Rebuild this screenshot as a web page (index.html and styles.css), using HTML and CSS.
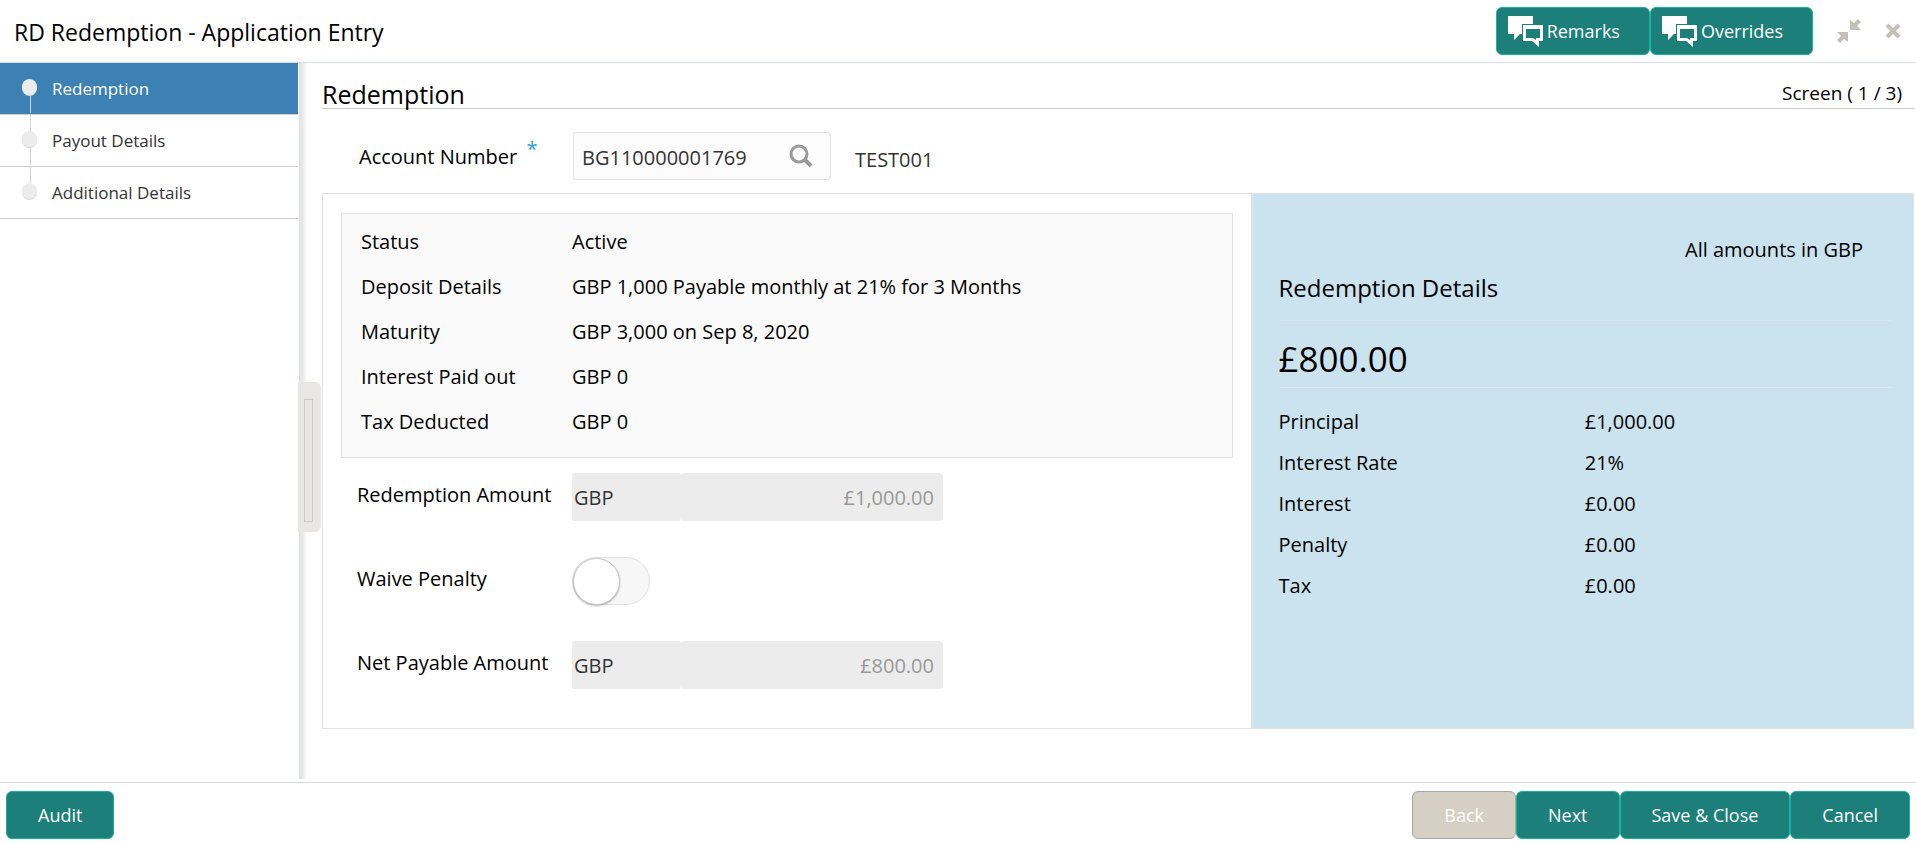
FILE: index.html
```html
<!DOCTYPE html>
<html lang="en">
<head>
  <meta charset="UTF-8">
  <meta name="viewport" content="width=device-width, initial-scale=1.0">
  <title>RD Redemption - Application Entry</title>
  <link rel="stylesheet" href="styles.css">
</head>
<body>
  <header class="header">
    <h1>RD Redemption - Application Entry</h1>
    <div class="header-actions">
      <button type="button" class="btn btn-icon">
        <svg width="36" height="32" viewBox="0 0 36 32"><path fill="#fff" d="M1 1h25v8H15v10h-2l-6 6v-6H1z"/><path fill="#fff" fill-rule="evenodd" d="M16 10h20v16h-4v6l-7-6h-9zM19 14v9h7l3 2v-2h4v-9z"/></svg>
        Remarks
      </button>
      <button type="button" class="btn btn-icon">
        <svg width="36" height="32" viewBox="0 0 36 32"><path fill="#fff" d="M1 1h25v8H15v10h-2l-6 6v-6H1z"/><path fill="#fff" fill-rule="evenodd" d="M16 10h20v16h-4v6l-7-6h-9zM19 14v9h7l3 2v-2h4v-9z"/></svg>
        Overrides
      </button>
      <button type="button" class="window-btn" aria-label="Collapse">
        <svg width="26" height="26" viewBox="0 0 26 26"><path fill="#c4c0b8" d="M14 2v10h11l-4-4 4-4-3-3-4 4zM12 24V14H1l4 4-4 4 3 3 4-4z"/></svg>
      </button>
      <button type="button" class="window-btn" aria-label="Close">
        <svg width="16" height="16" viewBox="0 0 16 16"><path stroke="#c4c0b8" stroke-width="4" d="M2 2l12 12M14 2L2 14"/></svg>
      </button>
    </div>
  </header>

  <div class="content">
    <nav class="sidebar">
      <a href="#redemption" class="step active">Redemption</a>
      <a href="#payout" class="step">Payout Details</a>
      <a href="#additional" class="step">Additional Details</a>
    </nav>
    <div class="splitter">
      <button type="button" class="handle" aria-label="Toggle menu"><span></span></button>
    </div>

    <main class="main">
      <div class="main-title">
        <h2>Redemption</h2>
        <span>Screen ( 1 / 3)</span>
      </div>

      <div class="account">
        <label for="account-number">Account Number <sup>*</sup></label>
        <div class="search-box">
          <input type="text" id="account-number" value="BG110000001769">
          <button type="button" aria-label="Search">
            <svg width="24" height="24" viewBox="0 0 24 24" fill="none" stroke="#999"><circle cx="10" cy="10" r="8" stroke-width="3"/><path stroke-width="4" d="M15 15l7 7"/></svg>
          </button>
        </div>
        <span class="account-name">TEST001</span>
      </div>

      <div class="panel">
        <section class="panel-left">
          <dl class="info">
            <dt>Status</dt><dd>Active</dd>
            <dt>Deposit Details</dt><dd>GBP 1,000 Payable monthly at 21% for 3 Months</dd>
            <dt>Maturity</dt><dd>GBP 3,000 on Sep 8, 2020</dd>
            <dt>Interest Paid out</dt><dd>GBP 0</dd>
            <dt>Tax Deducted</dt><dd>GBP 0</dd>
          </dl>
          <form class="fields">
            <label for="redemption-amount">Redemption Amount</label>
            <div class="amount">
              <input type="text" class="currency" value="GBP" aria-label="Currency" disabled>
              <input type="text" class="value" id="redemption-amount" value="£1,000.00" disabled>
            </div>
            <label for="waive-penalty">Waive Penalty</label>
            <input type="checkbox" class="switch" id="waive-penalty">
            <label for="net-amount">Net Payable Amount</label>
            <div class="amount">
              <input type="text" class="currency" value="GBP" aria-label="Currency" disabled>
              <input type="text" class="value" id="net-amount" value="£800.00" disabled>
            </div>
          </form>
        </section>

        <aside class="details">
          <p class="note">All amounts in GBP</p>
          <h3>Redemption Details</h3>
          <p class="total">£800.00</p>
          <table>
            <tr><th scope="row">Principal</th><td>£1,000.00</td></tr>
            <tr><th scope="row">Interest Rate</th><td>21%</td></tr>
            <tr><th scope="row">Interest</th><td>£0.00</td></tr>
            <tr><th scope="row">Penalty</th><td>£0.00</td></tr>
            <tr><th scope="row">Tax</th><td>£0.00</td></tr>
          </table>
        </aside>
      </div>
    </main>
  </div>

  <footer class="footer">
    <button type="button" class="btn">Audit</button>
    <div class="footer-actions">
      <button type="button" class="btn" disabled>Back</button>
      <button type="button" class="btn">Next</button>
      <button type="button" class="btn">Save &amp; Close</button>
      <button type="button" class="btn">Cancel</button>
    </div>
  </footer>
</body>
</html>
```
FILE: styles.css
```css
* {
  box-sizing: border-box;
}
body {
  font-family: "Open Sans", "Noto Sans", sans-serif;
  font-size: 20px;
  line-height: 28px;
  margin: 0;
  min-height: 100vh;
  display: flex;
  flex-direction: column;
  background: #fff;
  color: #000;
}
h1, h2, h3, p, dl, dd {
  margin: 0;
  font-weight: normal;
}
input, button {
  font-family: inherit;
  font-size: inherit;
}

/* header */
.header {
  display: flex;
  justify-content: space-between;
  align-items: center;
  height: 63px;
  padding: 0 15px 0 14px;
  border-bottom: 1px solid #d6dde3;
}
.header h1 {
  font-size: 23px;
  line-height: 32px;
  padding-top: 2px;
}
.header-actions {
  display: flex;
  align-items: center;
}
.btn {
  height: 48px;
  padding: 0 31px;
  border: 1px solid #14b5a5;
  border-radius: 6px;
  background: #1c7f7a;
  color: #fff;
  font-size: 18px;
  cursor: pointer;
}
.btn:hover {
  background: #166b67;
}
.btn:disabled {
  background: #d6cfc4;
  border-color: #9fabab;
  cursor: default;
}
.btn-icon {
  display: flex;
  align-items: center;
  gap: 4px;
  padding: 0 29px 0 10px;
}
.window-btn {
  display: flex;
  padding: 0;
  margin-left: 23px;
  border: none;
  background: none;
  cursor: pointer;
}

/* sidebar */
.content {
  display: flex;
  flex: 1;
}
.sidebar {
  width: 298px;
  flex-shrink: 0;
}
.step {
  position: relative;
  display: block;
  height: 52px;
  padding: 12px 0 0 52px;
  border-bottom: 1px solid #cfccc6;
  color: #333;
  font-size: 17px;
  text-decoration: none;
}
.step.active {
  background: #3c80b4;
  color: #fff;
}
.step::before {
  content: "";
  position: absolute;
  left: 30px;
  top: 0;
  width: 1px;
  height: 50px;
  background: #d3d3d3;
}
.step:first-child::before {
  top: 32px;
  height: 18px;
}
.step:last-child::before {
  height: 16px;
}
.step::after {
  content: "";
  position: absolute;
  left: 22px;
  top: 16px;
  width: 15px;
  height: 16px;
  border-radius: 50%;
  background: #ececec;
  box-shadow: 0 1px 0 #d8d8d8;
}
.splitter {
  width: 24px;
  flex-shrink: 0;
  margin-bottom: 3px;
  padding-top: 319px;
  background: linear-gradient(to right, #fff 1px, #d6dde3 1px, #e2e4e6 2px, #e9eaeb 5px, #fff 9px);
}
.handle {
  display: block;
  width: 23px;
  height: 150px;
  padding: 17px 8px 10px 6px;
  border: none;
  border-radius: 0 6px 6px 0;
  background: #e8e7e3;
  cursor: pointer;
}
.handle span {
  display: block;
  height: 100%;
  border: 1px solid #c8c8c8;
}

/* main */
.main {
  flex: 1;
  min-width: 0;
  padding: 14px 2px 0 0;
}
.main-title {
  display: flex;
  justify-content: space-between;
  height: 32px;
  padding-right: 12px;
  border-bottom: 1px solid #c8c8c8;
}
.main-title h2 {
  font-size: 25px;
  line-height: 34px;
}
.main-title span {
  font-size: 19px;
  line-height: 32px;
}
.account {
  display: flex;
  align-items: center;
  height: 84px;
  padding: 10px 0 0 37px;
}
.account label {
  width: 214px;
  padding-top: 2px;
}
.account sup {
  margin-left: 4px;
  color: #2a9fd8;
  font-size: 20px;
  line-height: 0;
}
.search-box {
  display: flex;
  align-items: center;
  width: 258px;
  height: 48px;
  border: 1px solid #dfe1e3;
  border-radius: 3px;
  background: #fcfcfc;
}
.search-box input {
  flex: 1;
  min-width: 0;
  height: 100%;
  padding: 2px 8px 0;
  border: none;
  outline: none;
  background: none;
  color: #333;
}
.search-box button {
  display: flex;
  padding: 0;
  margin-right: 17px;
  border: none;
  background: none;
  cursor: pointer;
}
.account-name {
  margin-left: 24px;
  padding-top: 8px;
  color: #333;
}
.panel {
  display: grid;
  grid-template-columns: 7fr 5fr;
  border: 1px solid #dfe1e3;
}
.panel-left {
  padding: 19px 18px 39px;
}
.info {
  display: grid;
  grid-template-columns: 211px 1fr;
  grid-auto-rows: 45px;
  padding: 5px 19px 13px;
  border: 1px solid #dfe1e3;
  background: #fafafa;
  line-height: 45px;
}
.fields {
  display: grid;
  grid-template-columns: 215px 1fr;
  row-gap: 36px;
  padding: 15px 0 0 16px;
}
.fields label {
  line-height: 44px;
}
.amount {
  display: flex;
}
.amount input {
  height: 48px;
  border: none;
  border-radius: 3px;
  background: #ececec;
}
.amount .currency {
  width: 109px;
  padding: 2px;
  color: #333;
}
.amount .value {
  width: 262px;
  padding: 2px 9px;
  color: #999;
  text-align: right;
}
.switch {
  appearance: none;
  width: 78px;
  height: 48px;
  margin: 0;
  padding: 0;
  border: 1px solid #e2e2e2;
  border-radius: 24px;
  background: #f7f7f7;
  cursor: pointer;
}
.switch::before {
  content: "";
  display: block;
  width: 45px;
  height: 45px;
  border: 1px solid #c8c8c8;
  border-radius: 50%;
  background: #fff;
  box-shadow: 0 1px 2px rgba(0, 0, 0, 0.3);
}
.switch:checked {
  background: #1c7f7a;
}
.switch:checked::before {
  margin-left: 31px;
}

/* redemption details */
.details {
  padding: 42px 22px 0 26px;
  border-left: 2px solid #dfe1e3;
  background: #cae3ee;
}
.note {
  padding-right: 28px;
  text-align: right;
}
.details h3 {
  height: 57px;
  border-bottom: 1px solid #e0e3e4;
  font-size: 24px;
  line-height: 48px;
}
.total {
  height: 67px;
  border-bottom: 1px solid #dce8ee;
  font-size: 35px;
  line-height: 76px;
}
.details table {
  width: 100%;
  margin-top: 13px;
  border-collapse: collapse;
}
.details th, .details td {
  width: 50%;
  height: 41px;
  padding: 0;
  font-weight: normal;
  text-align: left;
}

/* footer */
.footer {
  display: flex;
  justify-content: space-between;
  padding: 8px 6px 5px;
  border-top: 1px solid #d6dadd;
}
.footer-actions {
  display: flex;
}
```
